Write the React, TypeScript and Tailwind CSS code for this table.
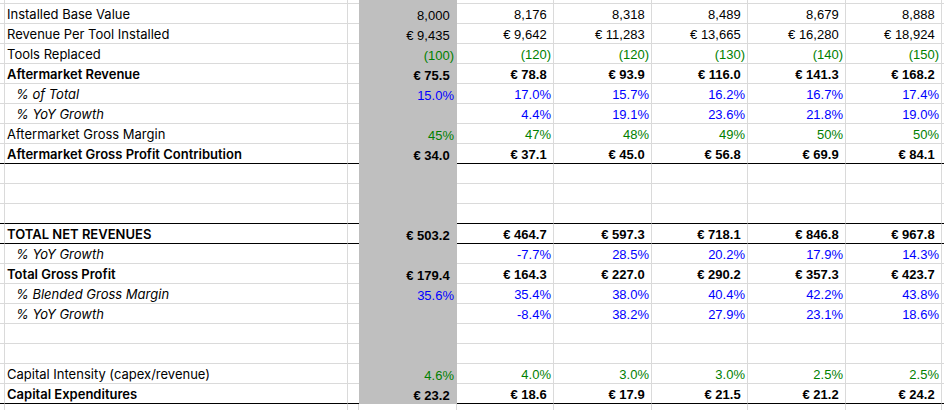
type Tone = "black" | "blue" | "green";

type Row = {
  label?: string;
  style?: "plain" | "bold" | "italic";
  tone?: Tone;
  vals?: string[];
  line?: boolean;
};

const rows: Row[] = [
  { label: "Installed Base Value", vals: ["8,000", "8,176", "8,318", "8,489", "8,679", "8,888"] },
  { label: "Revenue Per Tool Installed", vals: ["€ 9,435", "€ 9,642", "€ 11,283", "€ 13,665", "€ 16,280", "€ 18,924"] },
  { label: "Tools Replaced", tone: "green", vals: ["(100)", "(120)", "(120)", "(130)", "(140)", "(150)"] },
  { label: "Aftermarket Revenue", style: "bold", vals: ["€ 75.5", "€ 78.8", "€ 93.9", "€ 116.0", "€ 141.3", "€ 168.2"] },
  { label: "% of Total", style: "italic", tone: "blue", vals: ["15.0%", "17.0%", "15.7%", "16.2%", "16.7%", "17.4%"] },
  { label: "% YoY Growth", style: "italic", tone: "blue", vals: ["", "4.4%", "19.1%", "23.6%", "21.8%", "19.0%"] },
  { label: "Aftermarket Gross Margin", tone: "green", vals: ["45%", "47%", "48%", "49%", "50%", "50%"] },
  { label: "Aftermarket Gross Profit Contribution", style: "bold", line: true, vals: ["€ 34.0", "€ 37.1", "€ 45.0", "€ 56.8", "€ 69.9", "€ 84.1"] },
  {},
  {},
  { line: true },
  { label: "TOTAL NET REVENUES", style: "bold", line: true, vals: ["€ 503.2", "€ 464.7", "€ 597.3", "€ 718.1", "€ 846.8", "€ 967.8"] },
  { label: "% YoY Growth", style: "italic", tone: "blue", vals: ["", "-7.7%", "28.5%", "20.2%", "17.9%", "14.3%"] },
  { label: "Total Gross Profit", style: "bold", vals: ["€ 179.4", "€ 164.3", "€ 227.0", "€ 290.2", "€ 357.3", "€ 423.7"] },
  { label: "% Blended Gross Margin", style: "italic", tone: "blue", vals: ["35.6%", "35.4%", "38.0%", "40.4%", "42.2%", "43.8%"] },
  { label: "% YoY Growth", style: "italic", tone: "blue", vals: ["", "-8.4%", "38.2%", "27.9%", "23.1%", "18.6%"] },
  {},
  {},
  { label: "Capital Intensity (capex/revenue)", tone: "green", vals: ["4.6%", "4.0%", "3.0%", "3.0%", "2.5%", "2.5%"] },
  { label: "Capital Expenditures", style: "bold", line: true, vals: ["€ 23.2", "€ 18.6", "€ 17.9", "€ 21.5", "€ 21.2", "€ 24.2"] },
];

const grid = "grid grid-cols-[5px_343px_11px_98px_97px_98px_96px_98px_96px_2px]";
const toneClass: Record<Tone, string> = {
  black: "text-black",
  blue: "text-[#0000ff]",
  green: "text-[#008000]",
};

function Value({ v, tone, bold }: { v: string; tone: Tone; bold: boolean }) {
  if (!v) return null;
  // accounting style: positives leave room for a closing paren
  const pad = !v.startsWith("(") && !v.endsWith("%");
  return (
    <span
      className={`font-['Liberation_Sans',Arial,sans-serif] text-[13px] leading-none whitespace-pre ${toneClass[tone]} ${bold ? "font-bold" : ""}`}
    >
      {v}
      {pad && <span className="invisible">)</span>}
    </span>
  );
}

function SheetRow({ row }: { row: Row }) {
  const b = row.line ? "border-b-black" : "border-b-[#dadada]";
  const tone = row.tone ?? "black";
  const bold = row.style === "bold";
  const vals = row.vals ?? ["", "", "", "", "", ""];
  const labelCls =
    row.style === "bold"
      ? "font-semibold pl-[2px]"
      : row.style === "italic"
        ? "italic pl-[11px]"
        : "pl-[2px]";
  const cell = `h-[20px] border-b ${b}`;
  const num = `flex items-end justify-end pr-[2px] pb-[2px] overflow-visible`;

  return (
    <div className={grid}>
      <div className={`${cell} border-r border-r-[#dadada]`} />
      <div className={`${cell} border-r border-r-[#dadada] flex items-end pb-[2px] ${labelCls}`}>
        <span className="font-['Inter',sans-serif] text-[13px] leading-none text-black whitespace-nowrap">
          {row.label}
        </span>
      </div>
      <div className={cell} />
      <div className={`h-[20px] bg-[#bfbfbf] ${num} pr-[3px]`}>
        <Value v={vals[0]} tone={tone} bold={bold} />
      </div>
      {vals.slice(1).map((v, i) => (
        <div key={i} className={`${cell} border-r border-r-[#dadada] ${num}`}>
          <Value v={v} tone={tone} bold={bold} />
        </div>
      ))}
      <div className={cell} />
    </div>
  );
}

export default function App() {
  return (
    <div className="w-[944px] h-[410px] overflow-hidden bg-white">
      <div className={`${grid} h-[4px]`}>
        <div className="border-r border-b border-[#dadada]" />
        <div className="border-r border-b border-[#dadada]" />
        <div className="border-b border-[#dadada]" />
        <div className="bg-[#bfbfbf]" />
        <div className="border-r border-b border-[#dadada]" />
        <div className="border-r border-b border-[#dadada]" />
        <div className="border-r border-b border-[#dadada]" />
        <div className="border-r border-b border-[#dadada]" />
        <div className="border-r border-b border-[#dadada]" />
        <div className="border-b border-[#dadada]" />
      </div>
      {rows.map((r, i) => (
        <SheetRow key={i} row={r} />
      ))}
      <div className={`${grid} h-[6px]`}>
        <div className="border-r border-[#dadada]" />
        <div className="border-r border-[#dadada]" />
        <div className="border-r border-[#dadada]" />
        <div className="border-r border-[#dadada]" />
        <div className="border-r border-[#dadada]" />
        <div className="border-r border-[#dadada]" />
        <div className="border-r border-[#dadada]" />
        <div className="border-r border-[#dadada]" />
        <div className="border-r border-[#dadada]" />
        <div />
      </div>
    </div>
  );
}
